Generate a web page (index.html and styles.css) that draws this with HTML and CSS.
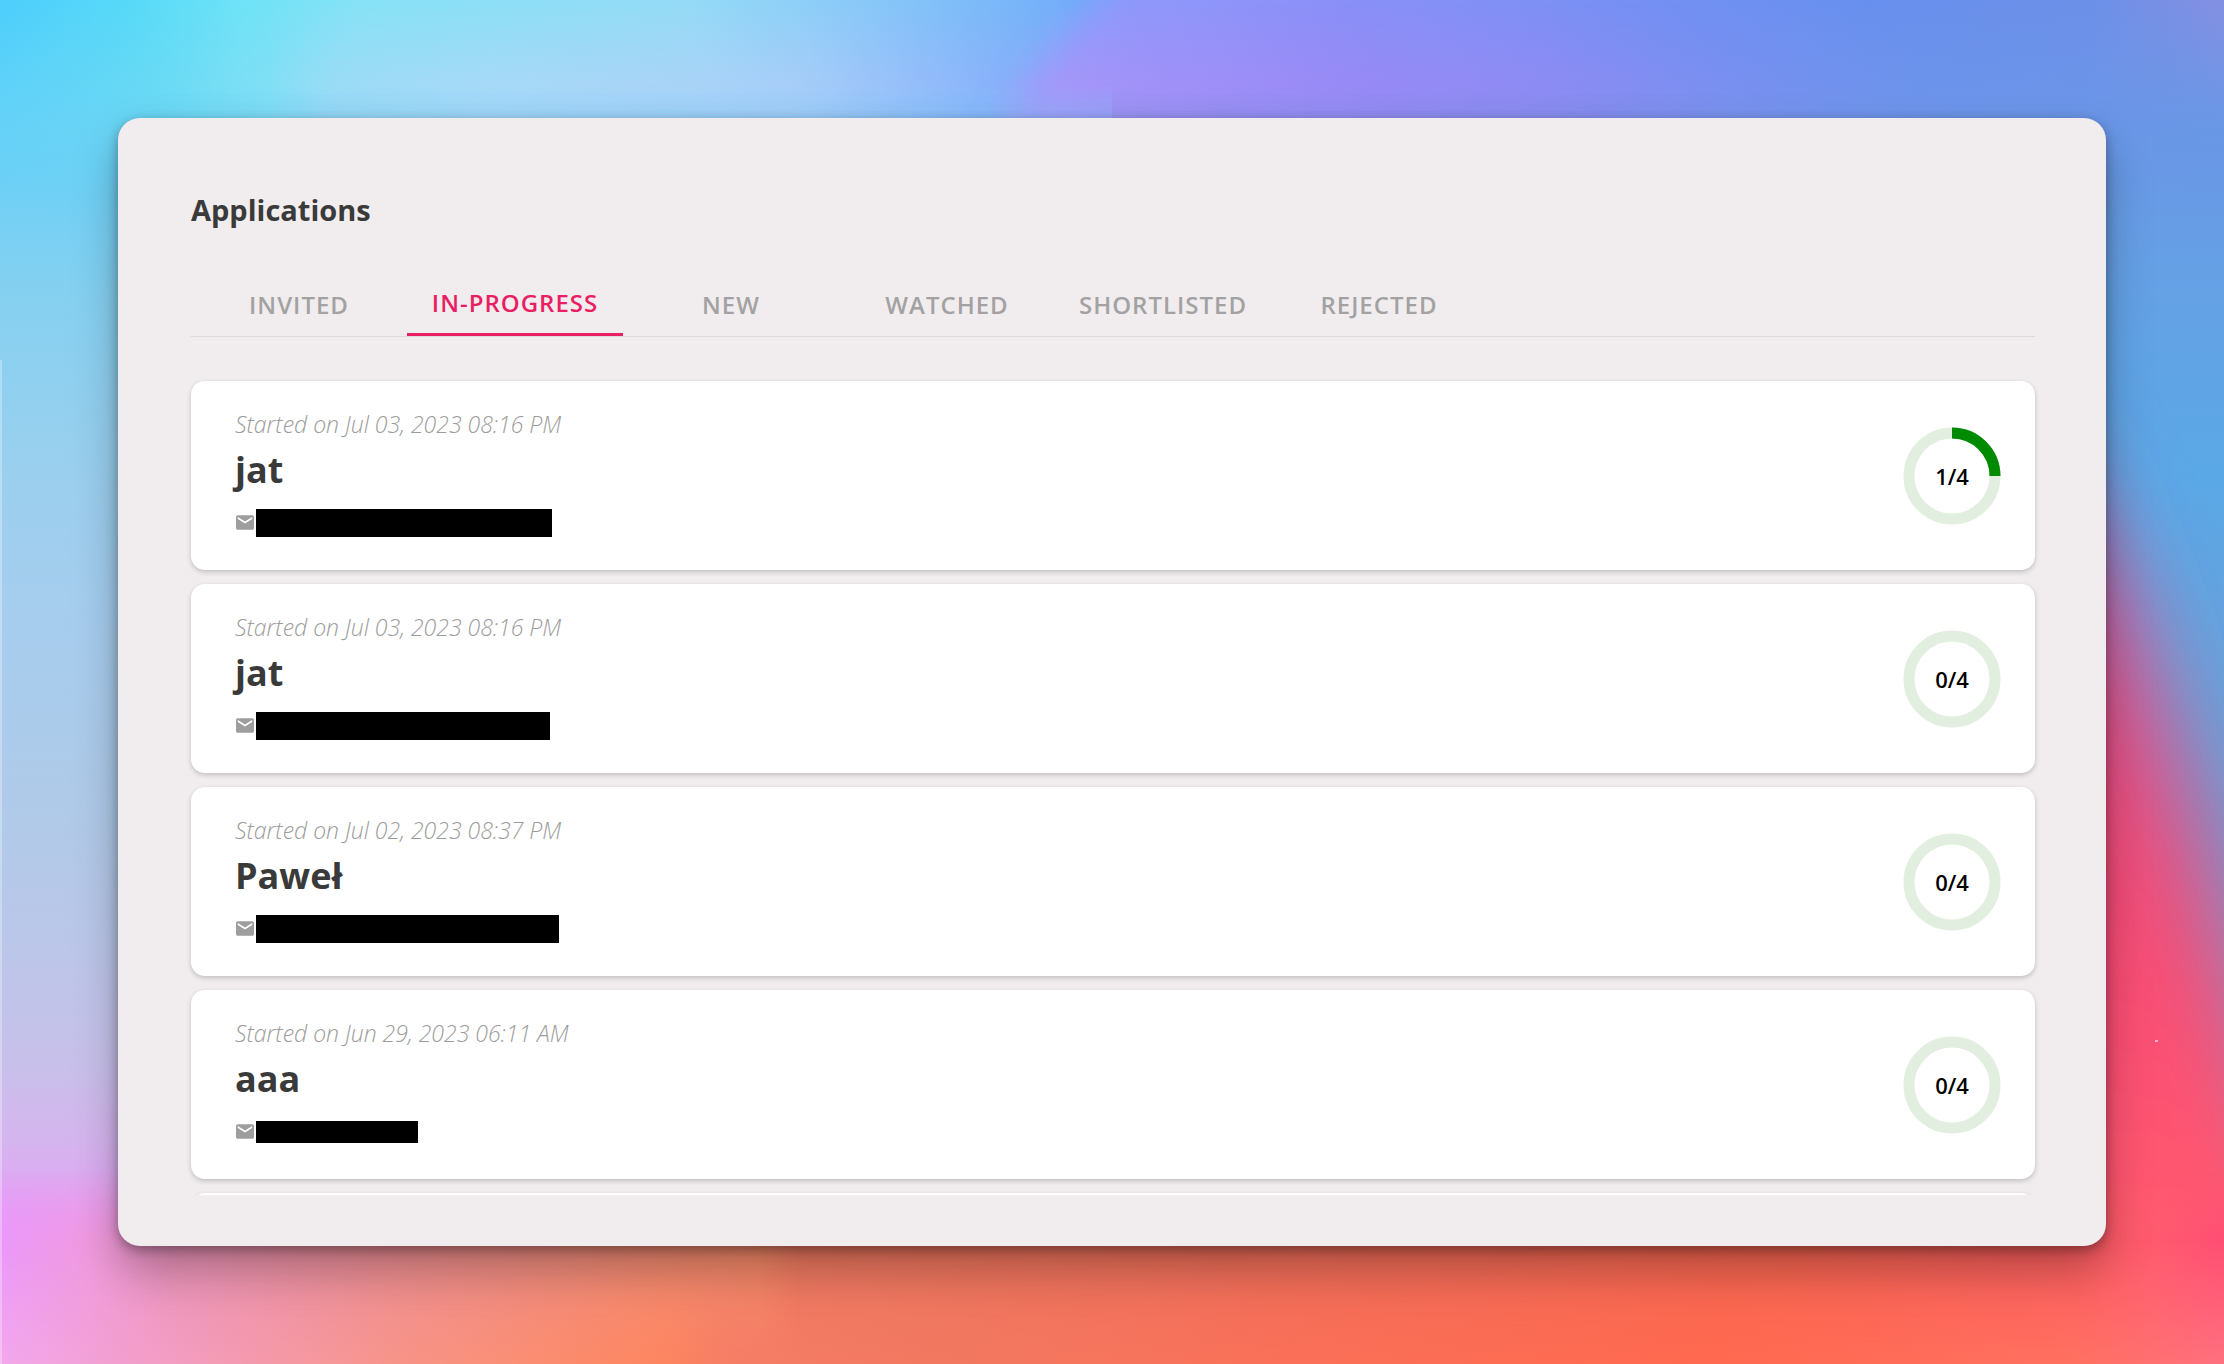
FILE: index.html
```html
<!DOCTYPE html>
<html lang="en">
<head>
    <meta charset="utf-8">
    <title>Applications</title>
    <link rel="stylesheet" href="styles.css">
</head>
<body>
    <!-- Wallpaper -->
    <svg class="wallpaper" viewBox="0 0 2224 1364" preserveAspectRatio="none" aria-hidden="true">
        <defs>
            <linearGradient id="left" x1="0" y1="0" x2="0" y2="1">
                <stop offset="0" stop-color="#4dcffc"/>
                <stop offset=".1" stop-color="#66d0f8"/>
                <stop offset=".22" stop-color="#86d0f0"/>
                <stop offset=".35" stop-color="#9bcfee"/>
                <stop offset=".45" stop-color="#a6cdee"/>
                <stop offset=".6" stop-color="#b0cae8"/>
                <stop offset=".7" stop-color="#bcc6e8"/>
                <stop offset=".78" stop-color="#c8c0ea"/>
                <stop offset=".84" stop-color="#d6b4ee"/>
                <stop offset=".9" stop-color="#e79cf8"/>
                <stop offset="1" stop-color="#f3a5e8"/>
            </linearGradient>
            <linearGradient id="right" x1="0" y1="0" x2="0" y2="1">
                <stop offset="0" stop-color="#7690e5"/>
                <stop offset=".1" stop-color="#6a98e6"/>
                <stop offset=".2" stop-color="#65a0e5"/>
                <stop offset=".35" stop-color="#5aa8e6"/>
                <stop offset=".5" stop-color="#66a2dc"/>
                <stop offset="1" stop-color="#8888c0"/>
            </linearGradient>
            <linearGradient id="pink" gradientUnits="userSpaceOnUse" x1="0" y1="450" x2="0" y2="1364">
                <stop offset="0" stop-color="#d85098"/>
                <stop offset=".35" stop-color="#ec4a7c"/>
                <stop offset=".6" stop-color="#fa4e74"/>
                <stop offset=".8" stop-color="#ff5570"/>
                <stop offset="1" stop-color="#ff6c70"/>
            </linearGradient>
            <linearGradient id="sky" gradientUnits="userSpaceOnUse" x1="0" y1="0" x2="2224" y2="0">
                <stop offset="0" stop-color="#4dcffc"/>
                <stop offset=".06" stop-color="#58daf8"/>
                <stop offset=".11" stop-color="#6fe3f7"/>
                <stop offset=".16" stop-color="#86e2f6"/>
                <stop offset=".31" stop-color="#94dbf6"/>
                <stop offset=".38" stop-color="#8acbf8"/>
                <stop offset=".49" stop-color="#70acf9"/>
            </linearGradient>
            <linearGradient id="skyLow" gradientUnits="userSpaceOnUse" x1="0" y1="0" x2="2224" y2="0">
                <stop offset="0" stop-color="#68d2f6"/>
                <stop offset=".07" stop-color="#6fd8f2"/>
                <stop offset=".12" stop-color="#88ddf3"/>
                <stop offset=".15" stop-color="#a8d8f5"/>
                <stop offset=".22" stop-color="#b6d6f8"/>
                <stop offset=".36" stop-color="#b4cbf8"/>
                <stop offset=".45" stop-color="#90aefa"/>
            </linearGradient>
            <linearGradient id="violet" gradientUnits="userSpaceOnUse" x1="0" y1="0" x2="2224" y2="0">
                <stop offset=".5" stop-color="#9099fb"/>
                <stop offset=".6" stop-color="#8a90f8"/>
                <stop offset=".68" stop-color="#8090f5"/>
                <stop offset=".77" stop-color="#7090f2"/>
                <stop offset=".84" stop-color="#6890ee"/>
                <stop offset=".94" stop-color="#6c90e8"/>
                <stop offset="1" stop-color="#8590e2"/>
            </linearGradient>
            <linearGradient id="violetLow" gradientUnits="userSpaceOnUse" x1="0" y1="0" x2="2224" y2="0">
                <stop offset=".45" stop-color="#b298f8"/>
                <stop offset=".53" stop-color="#a98cf6"/>
                <stop offset=".62" stop-color="#9f86f5"/>
                <stop offset=".7" stop-color="#9488f2"/>
                <stop offset=".78" stop-color="#7e90f0"/>
                <stop offset=".86" stop-color="#6e94ea"/>
                <stop offset="1" stop-color="#6898e6"/>
            </linearGradient>
            <linearGradient id="ember" gradientUnits="userSpaceOnUse" x1="0" y1="0" x2="2224" y2="0">
                <stop offset="0" stop-color="#ea98fa"/>
                <stop offset=".04" stop-color="#f09ae0"/>
                <stop offset=".08" stop-color="#ea92b8"/>
                <stop offset=".18" stop-color="#ec8c92"/>
                <stop offset=".34" stop-color="#f38a68"/>
                <stop offset=".36" stop-color="#ec7860"/>
                <stop offset=".55" stop-color="#ee6e5a"/>
                <stop offset=".8" stop-color="#f76450"/>
                <stop offset=".93" stop-color="#fc5c60"/>
                <stop offset=".97" stop-color="#ff5a70"/>
                <stop offset="1" stop-color="#ff4e74"/>
            </linearGradient>
            <linearGradient id="emberLow" gradientUnits="userSpaceOnUse" x1="0" y1="0" x2="2224" y2="0">
                <stop offset="0" stop-color="#f2a8ec"/>
                <stop offset=".05" stop-color="#f2a0d0"/>
                <stop offset=".11" stop-color="#f49ab0"/>
                <stop offset=".18" stop-color="#f79488"/>
                <stop offset=".25" stop-color="#fb8c6e"/>
                <stop offset=".3" stop-color="#fd8560"/>
                <stop offset=".33" stop-color="#f57c66"/>
                <stop offset=".43" stop-color="#f27860"/>
                <stop offset=".58" stop-color="#fa7058"/>
                <stop offset=".77" stop-color="#ff6a50"/>
                <stop offset=".93" stop-color="#ff7060"/>
                <stop offset="1" stop-color="#ff7080"/>
            </linearGradient>
            <linearGradient id="fade" x1="0" y1="0" x2="0" y2="1">
                <stop offset="0" stop-color="#000"/>
                <stop offset="1" stop-color="#fff"/>
            </linearGradient>
            <linearGradient id="fadeOut" x1="0" y1="0" x2="0" y2="1">
                <stop offset=".4" stop-color="#fff"/>
                <stop offset="1" stop-color="#000"/>
            </linearGradient>
            <mask id="topLow"><rect width="2224" height="130" fill="url(#fade)"/></mask>
            <mask id="topBand"><rect width="2224" height="210" fill="url(#fadeOut)"/></mask>
            <mask id="bottomLow"><rect y="1240" width="2224" height="124" fill="url(#fade)"/></mask>
            <mask id="bottomBand">
                <rect y="1170" width="2224" height="70" fill="url(#fade)"/>
                <rect y="1239" width="2224" height="125" fill="#fff"/>
            </mask>
            <filter id="soft" filterUnits="userSpaceOnUse" x="1700" y="200" width="700" height="1400"><feGaussianBlur stdDeviation="46"/></filter>
            <filter id="edge" filterUnits="userSpaceOnUse" x="0" y="-100" width="2400" height="500"><feGaussianBlur stdDeviation="18"/></filter>
            <mask id="violetMask">
                <path d="M1130 -60L1100 0Q1010 80 965 220H2400V-60Z" fill="#fff" filter="url(#edge)"/>
            </mask>
        </defs>

        <rect width="1112" height="1364" fill="url(#left)"/>
        <rect x="1112" width="1112" height="1364" fill="url(#right)"/>
        <path d="M1900 400L2060 450L2130 610L2205 850L2260 1060L2400 1500H1900Z" fill="url(#pink)" filter="url(#soft)"/>

        <g mask="url(#topBand)">
            <rect width="1200" height="210" fill="url(#sky)"/>
            <g mask="url(#topLow)"><rect width="1200" height="130" fill="url(#skyLow)"/></g>
            <rect y="130" width="1200" height="80" fill="url(#skyLow)"/>
            <g mask="url(#violetMask)">
                <rect x="900" width="1324" height="130" fill="url(#violet)"/>
                <g mask="url(#topLow)"><rect x="900" width="1324" height="130" fill="url(#violetLow)"/></g>
                <rect x="900" y="130" width="1324" height="80" fill="url(#violetLow)"/>
            </g>
        </g>

        <g mask="url(#bottomBand)">
            <rect y="1170" width="2224" height="194" fill="url(#ember)"/>
            <g mask="url(#bottomLow)"><rect y="1240" width="2224" height="124" fill="url(#emberLow)"/></g>
        </g>

        <rect y="360" width="2" height="1004" fill="#fff" opacity=".3"/>
        <rect x="2155" y="1040" width="3" height="2" fill="#ffb0c8"/>
    </svg>

    <!-- Mail icon shared by the rows -->
    <svg class="sprite" aria-hidden="true">
        <symbol id="mail" viewBox="2 4 20 16">
            <path d="M20 4H4c-1.100 0-1.990.900-1.990 2L2 18c0 1.100.900 2 2 2h16c1.100 0 2-.900 2-2V6c0-1.100-.900-2-2-2zm0 4l-8 5-8-5V6l8 5 8-5v2z"/>
        </symbol>
    </svg>

    <main class="panel">
        <h1>Applications</h1>

        <!-- Status tabs -->
        <div class="tabs" role="tablist">
            <button class="tab" role="tab">INVITED</button>
            <button class="tab active" role="tab" aria-selected="true">IN-PROGRESS</button>
            <button class="tab" role="tab">NEW</button>
            <button class="tab" role="tab">WATCHED</button>
            <button class="tab" role="tab">SHORTLISTED</button>
            <button class="tab" role="tab">REJECTED</button>
        </div>

        <!-- Candidates -->
        <ul class="applications">
            <li class="card">
                <div class="info">
                    <p class="started">Started on Jul 03, 2023 08:16 PM</p>
                    <h2>jat</h2>
                    <div class="email">
                        <svg class="mail"><use href="#mail"/></svg>
                        <span class="redacted" style="width: 296px"></span>
                    </div>
                </div>
                <div class="progress">
                    <svg viewBox="0 0 98 98">
                        <circle class="track" cx="49" cy="49" r="43"/>
                        <circle class="bar" cx="49" cy="49" r="43" pathLength="4" stroke-dasharray="1 4" transform="rotate(-90 49 49)"/>
                    </svg>
                    <span>1/4</span>
                </div>
            </li>
            <li class="card">
                <div class="info">
                    <p class="started">Started on Jul 03, 2023 08:16 PM</p>
                    <h2>jat</h2>
                    <div class="email">
                        <svg class="mail"><use href="#mail"/></svg>
                        <span class="redacted" style="width: 294px"></span>
                    </div>
                </div>
                <div class="progress">
                    <svg viewBox="0 0 98 98"><circle class="track" cx="49" cy="49" r="43"/></svg>
                    <span>0/4</span>
                </div>
            </li>
            <li class="card">
                <div class="info">
                    <p class="started">Started on Jul 02, 2023 08:37 PM</p>
                    <h2>Paweł</h2>
                    <div class="email">
                        <svg class="mail"><use href="#mail"/></svg>
                        <span class="redacted" style="width: 303px"></span>
                    </div>
                </div>
                <div class="progress">
                    <svg viewBox="0 0 98 98"><circle class="track" cx="49" cy="49" r="43"/></svg>
                    <span>0/4</span>
                </div>
            </li>
            <li class="card">
                <div class="info">
                    <p class="started">Started on Jun 29, 2023 06:11 AM</p>
                    <h2>aaa</h2>
                    <div class="email">
                        <svg class="mail"><use href="#mail"/></svg>
                        <span class="redacted short" style="width: 162px"></span>
                    </div>
                </div>
                <div class="progress">
                    <svg viewBox="0 0 98 98"><circle class="track" cx="49" cy="49" r="43"/></svg>
                    <span>0/4</span>
                </div>
            </li>
            <!-- Next row, cut off by the list -->
            <li class="card"></li>
        </ul>
    </main>
</body>
</html>
```

FILE: styles.css
```css
* {
    box-sizing: border-box;
}

body {
    display: flex;
    height: 100vh;
    margin: 0;
    padding: 118px;
    font-family: "Open Sans", "Noto Sans", sans-serif;
    color: #3a3a3a;
}

/* Background */
.wallpaper {
    position: absolute;
    top: 0;
    left: 0;
    z-index: -1;
    width: 100%;
    height: 100%;
}

.sprite {
    display: none;
}

/* Window */
.panel {
    display: flex;
    flex: 1;
    flex-direction: column;
    min-width: 0;
    padding: 72px 71px 51px 73px;
    border-radius: 22px;
    background-color: #f1edee;
    box-shadow: 0 24px 46px rgba(0, 0, 0, 0.28), 0 4px 12px rgba(0, 0, 0, 0.32);
}

h1 {
    margin: 0 0 42px;
    font-size: 29px;
    font-weight: 700;
    line-height: 40px;
}

/* Tabs */
.tabs {
    display: flex;
    flex-shrink: 0;
    border-bottom: 1px solid #dadada;
}

.tab {
    width: 216px;
    height: 64px;
    padding: 0;
    border: none;
    background: none;
    color: #a2a2a2;
    font-family: inherit;
    font-size: 24px;
    font-weight: 600;
    letter-spacing: 1px;
    cursor: pointer;
}

.tab.active {
    border-bottom: 3px solid #e91e63;
    color: #e91e63;
}

/* Applications list */
.applications {
    display: flex;
    flex: 1;
    flex-direction: column;
    gap: 14px;
    min-height: 0;
    margin: 36px -8px 0;
    padding: 8px 8px 0;
    overflow: hidden;
    list-style: none;
}

.card {
    display: flex;
    flex-shrink: 0;
    justify-content: space-between;
    align-items: center;
    height: 189px;
    padding: 0 34px 0 44px;
    border-radius: 14px;
    background-color: #fff;
    box-shadow: 0 2px 5px rgba(0, 0, 0, 0.2);
}

.info {
    padding-bottom: 6px;
}

.started {
    margin: 0;
    color: #9c9c9c;
    font-size: 23px;
    font-style: italic;
    font-weight: 300;
    line-height: 30px;
}

h2 {
    margin: 6px 0 14px;
    font-size: 36px;
    font-weight: 700;
    line-height: 50px;
}

.email {
    display: flex;
    align-items: center;
    gap: 2px;
    height: 28px;
    padding-left: 1px;
}

.mail {
    width: 18px;
    height: 15px;
    fill: #9e9e9e;
}

.redacted {
    height: 28px;
    background-color: #000;
}

.redacted.short {
    height: 22px;
}

/* Progress ring */
.progress {
    display: grid;
    place-items: center;
    width: 98px;
    height: 98px;
    color: #000;
    font-size: 22px;
    font-weight: 600;
}

.progress > * {
    grid-area: 1 / 1;
}

.progress circle {
    fill: none;
    stroke-width: 11;
}

.progress .track {
    stroke: #e2eee0;
}

.progress .bar {
    stroke: #008a00;
}
```
